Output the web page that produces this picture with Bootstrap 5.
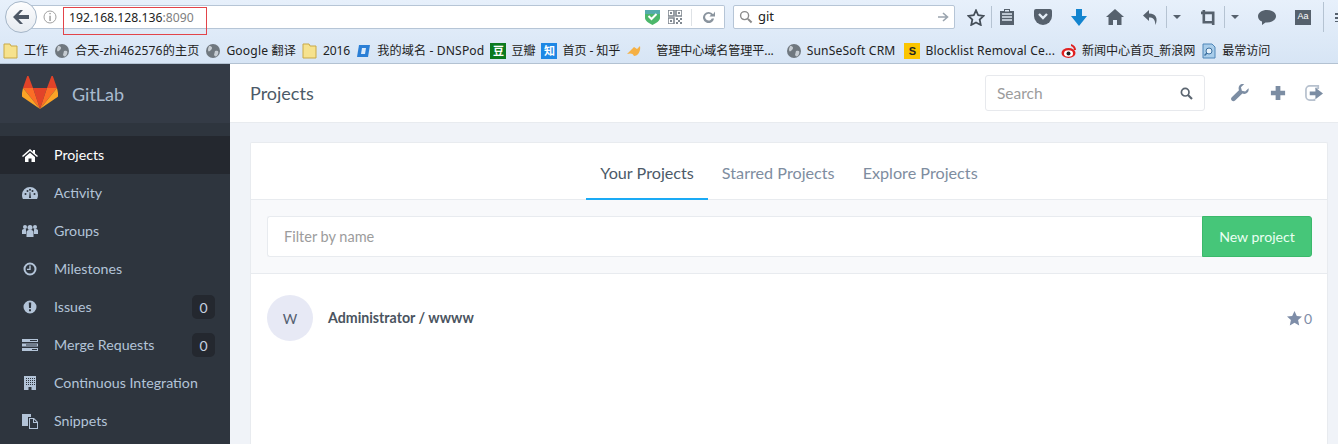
<!DOCTYPE html>
<html lang="en">
<head>
<meta charset="utf-8">
<title>GitLab Projects</title>
<link rel="stylesheet" href="https://cdn.jsdelivr.net/npm/bootstrap@5.3.0/dist/css/bootstrap.min.css">
<style>
html,body{height:444px;overflow:hidden}
body{font-family:"Lato","Noto Sans","Noto Sans CJK SC",sans-serif;background:#f0f3f8}
.chrome{height:64px;background:linear-gradient(#e7f0fb,#d7e5f5);border-bottom:1px solid #b3c2d2;color:#222;font-size:13px;font-family:"Noto Sans","Noto Sans CJK SC",sans-serif}
.toolrow{height:36px;padding-left:5px}
.backbtn{width:32px;height:32px;border-radius:50%;background:linear-gradient(#fdfdfe,#e6ebf1);border:1px solid #a5b6c8;position:relative;z-index:1;margin-top:1px}
.urlbar{width:695px;height:24px;margin-left:-7px;margin-top:5px;background:#fff;border:1px solid #b6c5d6;border-left:0;border-radius:0 2px 2px 0;padding-left:13px}
.urlhl{width:144px;height:28px;margin:1px 0 0 6px;border:1px solid #e2444a;padding-left:5px;line-height:20px;font-size:12.2px;align-self:flex-start;color:#222}
.urlhl span{color:#808080}
.searchbar{width:222px;height:24px;margin-left:8px;margin-top:5px;background:#fff;border:1px solid #b6c5d6;border-radius:2px;font-size:13px;padding:0 5px}
.tools{height:34px}
.tsep{height:22px;width:1px;background:#b5c3d2}
.tcaret{width:8px;height:4px;border:4px solid transparent;border-top-color:#56616d;border-bottom:0}
.bookrow{height:27px;font-size:12.1px;padding:3px 0 0 3px;white-space:nowrap;letter-spacing:-.1px}
.bm{margin-right:6px;gap:5px}
.bmlat{letter-spacing:.15px}
.bmi{width:16px;height:16px;flex:none}
.blank-i{width:16px;height:16px;display:inline-block;text-align:center;color:#fff;font-size:11px;line-height:16px;font-weight:700}
.shell{height:380px}
.sidebar{width:230px;flex:none;background:#2e353e;color:#b3c4d8;font-size:14.2px}
.brandbar{height:59px;background:#343b46;padding-left:22px;gap:14px;font-size:18px;margin-bottom:13px;color:#a9bbd0}
.brandbar svg{margin-top:-2px}
.brandbar span{margin-top:2px}
.sideitem{height:38px;padding:0 15px 1px 22px;color:#b3c4d8}
.sideitem.on{background:#24282f;color:#fff}
.sideico{width:16px;height:16px;margin:1px 16px 0 0;flex:none;fill:currentColor}
.cnt{width:23px;height:24px;margin-top:1px;background:#24282f;border-radius:5px;color:#c6d2e0;font-size:14px}
.mainpane{min-width:0}
.topbar{height:59px;background:#fff;border-bottom:1px solid #e8ebef;padding:0 15px 0 20px;color:#4c5a68;font-size:18px}
.topsearch{width:220px;height:36px;border:1px solid #e7e9ed;border-radius:3px;padding:0 11px;color:#9c9c9c;font-size:15.5px;margin-right:26px}
.topsearch span{margin-top:2px}
.topico{width:18px;height:18px;fill:#7c8da3;margin-left:18px}
.topico:first-of-type{margin-left:0}
.topico.wide{margin-left:20px}
.pagebody{padding:19px 10px 0 20px}
.panelbox{background:#fff;border:1px solid #e8ebef;border-bottom:0;height:320px;border-radius:2px 2px 0 0}
.tabbar{height:57px;border-bottom:1px solid #e8ebef;font-size:16.2px;color:#7e8da0}
.tabit{height:57px;line-height:60px;padding:0 14px;white-space:nowrap}
.tabit.on{color:#4c5a68;border-bottom:2px solid #1aaaf5}
.filterbar{height:74px;background:#f8f9fb;border-bottom:1px solid #e8ebef;padding:16px 15px 16px 16px}
.filterinput{height:41px;background:#fff;border:1px solid #e8ebef;border-right:0;border-radius:3px 0 0 3px;padding-left:16px;color:#9c9c9c;font-size:14.5px}
.newbtn{width:110px;height:41px;background:#46c679;border:1px solid #3bb96b;border-radius:0 3px 3px 0;color:#eafff2;font-size:14.1px}
.projrow{padding:21px 15px 0 16px}
.avatarw{width:46px;height:46px;border-radius:50%;background:#e7e9f5;color:#555f70;font-size:14px;margin-right:15px}
.pname{color:#4a5460;font-weight:700;font-size:14.2px;margin-top:-1px}
.stars{color:#7e8da8;font-size:14px;gap:2px}
</style>
</head>
<body>
<div class="chrome">
  <div class="toolrow d-flex align-items-start">
    <div class="backbtn d-flex align-items-center justify-content-center">
      <svg width="18" height="16" viewBox="0 0 18 16"><path d="M8 1 1 8l7 7h3L6.5 10H17V6H6.500L11 1z" fill="#4e5866"/></svg>
    </div>
    <div class="urlbar d-flex align-items-center">
      <svg width="14" height="14" viewBox="0 0 14 14" class="flex-none"><circle cx="7" cy="7" r="6" fill="none" stroke="#a0a0a0"/><path d="M6.400 3h1.300v1.300H6.400zM6.400 5.700h1.300V11H6.400z" fill="#909090"/></svg>
      <div class="urlhl">192.168.128.136<span>:8090</span></div>
      <div class="ms-auto d-flex align-items-center">
        <svg width="15" height="16" viewBox="0 0 15 16"><path d="M0 1h15v8c0 3-4 5-7.500 7C4 14 0 12 0 9z" fill="#4cb76b"/><path d="M0 1h15v4H0z" fill="#5aa5c8" opacity=".7"/><path d="m3.500 7 3 3 5-5" stroke="#fff" stroke-width="2" fill="none"/></svg>
        <svg width="14" height="14" viewBox="0 0 14 14" class="ms-2"><path d="M0 0h6v6H0zM8 0h6v6H8zM0 8h6v6H0z" fill="none" stroke="#808890" stroke-width="1.600"/><path d="M8 8h2v2H8zM12 8h2v2h-2zM10 10h2v2h-2zM8 12h2v2H8zM12 12h2v2h-2zM2 2h2v2H2zM10 2h2v2h-2zM2 10h2v2H2z" fill="#808890"/></svg>
        <span class="tsep" style="height:17px;margin:0 10px 0 9px;background:#dee2e6"></span>
        <svg width="13" height="13" viewBox="0 0 14 14" style="margin-right:9px"><path d="M12 3.500A6 6 0 1 0 13 8h-2.500A3.700 3.700 0 1 1 9.700 4L8 6h6V.5z" fill="#8a949e"/></svg>
      </div>
    </div>
    <div class="searchbar d-flex align-items-center">
      <svg width="14" height="14" viewBox="0 0 15 15"><circle cx="6" cy="6" r="4.300" fill="none" stroke="#8a8a8a" stroke-width="1.500"/><path d="m9.500 9.500 4 4" stroke="#8a8a8a" stroke-width="2.200"/></svg>
      <span style="margin-left:5px">git</span>
      <svg width="12" height="12" viewBox="0 0 12 12" class="ms-auto"><path d="M1 6h9M6 2l4.500 4L6 10" fill="none" stroke="#9aa4ae" stroke-width="1.600"/></svg>
    </div>
    <div class="tools d-flex align-items-center">
      <svg width="18" height="17" viewBox="0 0 20 19" style="margin-left:12px"><path d="m10 1.500 2.500 5.500 6 .7-4.400 4.100 1.200 6L10 15l-5.300 2.800 1.200-6L1.500 7.700l6-.7z" fill="none" stroke="#444e58" stroke-width="2"/></svg>
      <span class="tsep" style="margin-left:6px"></span>
      <svg width="16" height="18" viewBox="0 0 16 18" style="margin-left:7px"><path d="M5 1h6v2h4v14H1V3h4z" fill="#56616d"/><path d="M3 6h10M3 9h10M3 12h10" stroke="#dfe9f4" stroke-width="1.300"/><path d="M6 2h4v1.500H6z" fill="#dfe9f4"/></svg>
      <svg width="18" height="16" viewBox="0 0 18 16" style="margin-left:19px"><path d="M2 0h14a2 2 0 0 1 2 2v5a9 9 0 0 1-18 0V2a2 2 0 0 1 2-2z" fill="#56616d"/><path d="m5 5 4 4 4-4" fill="none" stroke="#e4edf7" stroke-width="2.400"/></svg>
      <svg width="16" height="17" viewBox="0 0 16 17" style="margin-left:19px"><path d="M5 0h6v7h5l-8 10-8-10h5z" fill="#1284cf"/></svg>
      <svg width="18" height="16" viewBox="0 0 18 16" style="margin-left:19px"><path d="M9 0 0 8h2.500v8h4.500v-5h4v5h4.500V8H18z" fill="#56616d"/></svg>
      <svg width="16" height="15" viewBox="0 0 16 15" style="margin-left:19px"><path d="M6 0 0 5.500 6 11V7.500c4 0 6 1.500 6.500 7.500C15 9 13.500 3.500 6 3.500z" fill="#56616d"/></svg>
      <span class="tsep" style="margin-left:7px"></span>
      <span class="tcaret" style="margin-left:6px"></span>
      <svg width="15" height="15" viewBox="0 0 16 16" style="margin-left:20px"><path d="M3 0v13h10v3M0 3h13v10" fill="none" stroke="#56616d" stroke-width="2.800"/></svg>
      <span class="tsep" style="margin-left:8px"></span>
      <span class="tcaret" style="margin-left:6px"></span>
      <svg width="18" height="15" viewBox="0 0 18 15" style="margin-left:19px"><path d="M9 0c5 0 9 2.700 9 6.200s-4 6.200-9 6.200H7.500L4 15v-3.400C1.500 10.500 0 8.500 0 6.200 0 2.700 4 0 9 0z" fill="#56616d"/></svg>
      <span class="d-inline-flex align-items-center justify-content-center" style="margin-left:19px;width:16px;height:15px;background:#56616d;color:#fff;font-size:9px;font-family:'Liberation Sans',sans-serif">Aa</span>
      <span class="tsep" style="margin-left:12px;height:30px"></span>
      <span style="margin-left:11px;width:3px;height:9px;background:repeating-linear-gradient(#56616d 0 2px,transparent 2px 4px)"></span>
    </div>
  </div>
  <div class="bookrow d-flex align-items-center">
    <div class="bm d-flex align-items-center"><svg class="bmi" viewBox="0 0 16 16"><path d="M1 1h6l1 2h6v12H1z" fill="#f6e28e" stroke="#c9a946"/></svg>工作</div>
    <div class="bm bmlat d-flex align-items-center"><svg class="bmi" viewBox="0 0 16 16"><circle cx="8" cy="8" r="7" fill="#70787f"/><path d="M4 3c3 0 4 2 2 4S3 9 3 6zM10 8c3-1 4 0 3 3s-3 3-4 1z" fill="#c6ccd2"/></svg>合天-zhi462576的主页</div>
    <div class="bm bmlat d-flex align-items-center"><svg class="bmi" viewBox="0 0 16 16"><circle cx="8" cy="8" r="7" fill="#70787f"/><path d="M4 3c3 0 4 2 2 4S3 9 3 6zM10 8c3-1 4 0 3 3s-3 3-4 1z" fill="#c6ccd2"/></svg>Google 翻译</div>
    <div class="bm d-flex align-items-center"><svg class="bmi" viewBox="0 0 16 16"><path d="M1 1h6l1 2h6v12H1z" fill="#f6e28e" stroke="#c9a946"/></svg>2016</div>
    <div class="bm bmlat d-flex align-items-center"><svg class="bmi" viewBox="0 0 16 16"><path d="M3 2h11l-2 12H1z" fill="#2b7fd6"/><path d="M6 5h4l-1 6H5z" fill="#dbeafa"/></svg>我的域名 - DNSPod</div>
    <div class="bm d-flex align-items-center"><span class="blank-i" style="background:#0b7a1f">豆</span>豆瓣</div>
    <div class="bm d-flex align-items-center"><span class="blank-i" style="background:#1e88e5">知</span>首页 - 知乎</div>
    <div class="bm d-flex align-items-center"><svg class="bmi" viewBox="0 0 16 16"><path d="M1 11 8 4l3 2 3-3c1 5-2 10-6 10-1-3-4-3-7-2z" fill="#f5b044"/></svg><span style="margin-left:9px">管理中心域名管理平...</span></div>
    <div class="bm bmlat d-flex align-items-center" style="margin-left:6px"><svg class="bmi" viewBox="0 0 16 16"><circle cx="8" cy="8" r="7" fill="#70787f"/><path d="M4 3c3 0 4 2 2 4S3 9 3 6zM10 8c3-1 4 0 3 3s-3 3-4 1z" fill="#c6ccd2"/></svg>SunSeSoft CRM</div>
    <div class="bm bmlat d-flex align-items-center" style="margin-left:3px"><span class="blank-i" style="background:#fbc500;color:#222;font-family:'Liberation Sans',sans-serif">S</span>Blocklist Removal Ce...</div>
    <div class="bm d-flex align-items-center"><svg class="bmi" viewBox="0 0 16 16"><ellipse cx="7.500" cy="10" rx="7" ry="5" fill="#e02020"/><ellipse cx="7.500" cy="10.500" rx="4.500" ry="3.300" fill="#fff"/><circle cx="7.500" cy="10.500" r="2" fill="#222"/><path d="M10 1c3 1 5 3 5 6h-2c0-2-1-3-3-4z" fill="#e02020"/></svg>新闻中心首页_新浪网</div>
    <div class="bm d-flex align-items-center"><svg class="bmi" viewBox="0 0 16 16"><path d="M2 1h9l3 3v11H2z" fill="#a9cdea" stroke="#4f86b8"/><circle cx="8" cy="8" r="3" fill="#e7f2fb" stroke="#3d70a0"/><path d="m6 10-2.500 2.500" stroke="#3d70a0" stroke-width="1.500"/></svg>最常访问</div>
  </div>
</div>
<div class="shell d-flex">
  <aside class="sidebar">
    <div class="brandbar d-flex align-items-center">
      <svg width="36" height="33" viewBox="0 0 36 33"><path d="m18 33-7-21h14z" fill="#e24329"/><path d="M18 33 11 12H1z" fill="#fc6d26"/><path d="M1 12-.5 19c0 1 .5 1.500 1 2L18 33z" fill="#fca326"/><path d="M1 12h10L6.500 0c-.3-.6-1-.6-1.300 0z" fill="#e24329"/><path d="m18 33 7-21h10z" fill="#fc6d26"/><path d="m35 12 1.500 7c0 1-.5 1.500-1 2L18 33z" fill="#fca326"/><path d="M35 12H25l4.500-12c.3-.6 1-.6 1.300 0z" fill="#e24329"/></svg>
      <span>GitLab</span>
    </div>
    <nav>
      <div class="sideitem on d-flex align-items-center"><svg class="sideico" viewBox="0 0 16 16"><path d="M8 2 0 9l1 1 7-6 7 6 1-1-3-2.600V3h-2v1.700zM3 10v5h3.500v-3.500h3V15H13v-5L8 5.700z"/></svg>Projects</div>
      <div class="sideitem d-flex align-items-center"><svg class="sideico" viewBox="0 0 16 16"><path fill-rule="evenodd" d="M8 2a8 8 0 0 0-8 8c0 1.500.4 3 1 4h14c.6-1 1-2.500 1-4a8 8 0 0 0-8-8zM2.500 9a1 1 0 1 1 2 0 1 1 0 0 1-2 0zm2-3a1 1 0 1 1 2 0 1 1 0 0 1-2 0zM7 4.800a1 1 0 1 1 2 0 1 1 0 0 1-2 0zM9.500 6a1 1 0 1 1 2 0 1 1 0 0 1-2 0zm2 3a1 1 0 1 1 2 0 1 1 0 0 1-2 0zM7 13l.7-6h.6L9 13z"/></svg>Activity</div>
      <div class="sideitem d-flex align-items-center"><svg class="sideico" viewBox="0 0 16 16"><circle cx="3" cy="4" r="2"/><circle cx="13" cy="4" r="2"/><circle cx="8" cy="4.500" r="2.500"/><path d="M0 7.500C0 6.500 1 6 3 6c.8 0 1 .2 1 .5V11H0zM16 7.500c0-1-1-1.500-3-1.500-.8 0-1 .2-1 .5V11h4zM4.500 9c0-1.500 1.500-2 3.500-2s3.500.5 3.500 2v5h-7z"/></svg>Groups</div>
      <div class="sideitem d-flex align-items-center"><svg class="sideico" viewBox="0 0 16 16"><path fill-rule="evenodd" d="M8 1.500a6.500 6.500 0 1 0 0 13 6.500 6.500 0 0 0 0-13zm0 2a4.500 4.500 0 1 1 0 9 4.500 4.500 0 0 1 0-9z"/><path d="M7.300 4.500h1.400V9H5V7.800h2.300z"/></svg>Milestones</div>
      <div class="sideitem d-flex align-items-center"><svg class="sideico" viewBox="0 0 16 16"><path fill-rule="evenodd" d="M8 1.500a6.500 6.500 0 1 0 0 13 6.500 6.500 0 0 0 0-13zM6.800 3.500h2.400L9 9H7zM7 10.300h2v2H7z"/></svg><span class="flex-grow-1">Issues</span><span class="cnt d-flex align-items-center justify-content-center">0</span></div>
      <div class="sideitem d-flex align-items-center"><svg class="sideico" viewBox="0 0 16 16"><path d="M0 2h16v3H0zM0 6.500h16v3H0zM0 11h16v3H0z"/><path d="M8 3h7v1H8zM4 7.500h11v1H4zM10 12h5v1h-5z" fill="#2e353e"/></svg><span class="flex-grow-1">Merge Requests</span><span class="cnt d-flex align-items-center justify-content-center">0</span></div>
      <div class="sideitem d-flex align-items-center text-nowrap"><svg class="sideico" viewBox="0 0 16 16"><path d="M2 1h12v14H2z"/><path d="M4 3h1v1H4zm2 0h1v1H6zm2 0h1v1H8zm2 0h1v1h-1zm2 0h1v1h-1zM4 5h1v1H4zm2 0h1v1H6zm2 0h1v1H8zm2 0h1v1h-1zm2 0h1v1h-1zM4 7h1v1H4zm2 0h1v1H6zm2 0h1v1H8zm2 0h1v1h-1zm2 0h1v1h-1zM4 9h1v1H4zm2 0h1v1H6zm2 0h1v1H8zm2 0h1v1h-1zm2 0h1v1h-1zM6.500 12h3v3h-3z" fill="#2e353e"/></svg>Continuous Integration</div>
      <div class="sideitem d-flex align-items-center"><svg class="sideico" viewBox="0 0 16 16"><path d="M0 1h9v3H6v9H0z"/><path fill-rule="evenodd" d="M7 5h5l4 4v7H7zm1 1v9h7V10h-4V6zm4 .500V9h2.500z"/></svg>Snippets</div>
    </nav>
  </aside>
  <div class="mainpane flex-grow-1">
    <header class="topbar d-flex align-items-center">
      <span class="flex-grow-1">Projects</span>
      <div class="topsearch d-flex align-items-center justify-content-between">
        <span>Search</span>
        <svg width="13" height="13" viewBox="0 0 13 13"><circle cx="5.200" cy="5.200" r="3.800" fill="none" stroke="#5b6570" stroke-width="1.700"/><path d="m8 8 4 4" stroke="#5b6570" stroke-width="2.200"/></svg>
      </div>
      <svg class="topico" viewBox="0 0 19 19"><path d="M18.500 4.500 15 8l-3.500-1L10.500 3.500 14 0c-3-.8-6 1.200-6 4.500 0 .8.200 1.500.4 2L.8 14c-1 1-1 2.500 0 3.500s2.500 1 3.500 0L12 10c.6.300 1.300.5 2 .5 3.300 0 5.300-3 4.500-6z"/></svg>
      <svg class="topico wide" viewBox="0 0 19 19"><path d="M7 2h5v5h5v5h-5v5H7v-5H2V7h5z"/></svg>
      <svg class="topico" viewBox="0 0 19 19"><path d="M11 4.500h3V2h-9a4 4 0 0 0-4 4v7a4 4 0 0 0 4 4h5v-1.500" fill="none" stroke="#b7c1ce" stroke-width="1.800"/><path d="M11 4v4H5v4h6v4l8-6z"/></svg>
    </header>
    <main class="pagebody">
      <section class="panelbox">
        <div class="tabbar d-flex justify-content-center">
          <div class="tabit on">Your Projects</div>
          <div class="tabit">Starred Projects</div>
          <div class="tabit">Explore Projects</div>
        </div>
        <div class="filterbar d-flex">
          <div class="filterinput flex-grow-1 d-flex align-items-center">Filter by name</div>
          <div class="newbtn d-flex align-items-center justify-content-center">New project</div>
        </div>
        <div class="projrow d-flex align-items-center">
          <div class="avatarw d-flex align-items-center justify-content-center">W</div>
          <div class="pname flex-grow-1">Administrator / wwww</div>
          <div class="stars d-flex align-items-center">
            <svg width="15" height="15" viewBox="0 0 15 15"><path d="m7.500 0 2.300 5 5.200.6-3.900 3.500 1.100 5.400-4.700-2.800-4.700 2.800 1.100-5.400L0 5.600 5.200 5z" fill="#7e8da8"/></svg>
            <span>0</span>
          </div>
        </div>
      </section>
    </main>
  </div>
</div>
</body>
</html>
